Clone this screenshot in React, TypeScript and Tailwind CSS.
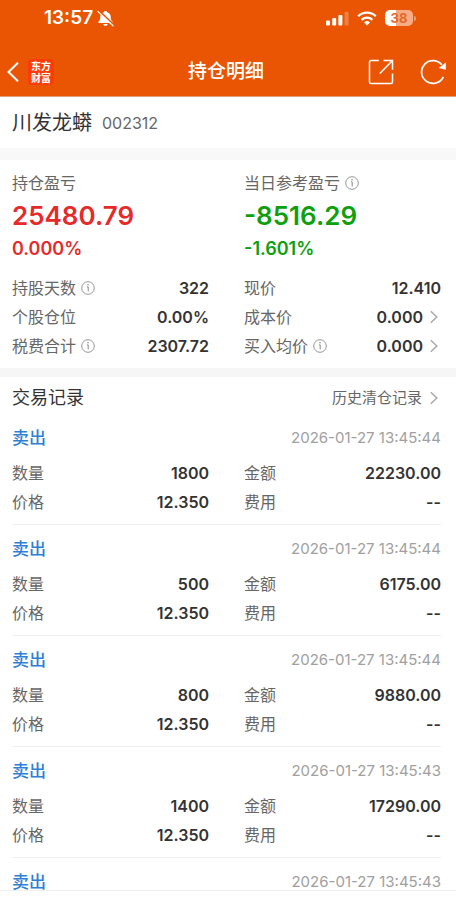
import type { ReactNode } from "react";

interface TradeRecord {
  id: number
  time: string
  detail?: {
    count: string
    price: string
    amount: string
    fee: string
  }
}

const records: TradeRecord[] = [
  { id: 1, time: "2026-01-27 13:45:44", detail: { count: "1800", price: "12.350", amount: "22230.00", fee: "--" } },
  { id: 2, time: "2026-01-27 13:45:44", detail: { count: "500", price: "12.350", amount: "6175.00", fee: "--" } },
  { id: 3, time: "2026-01-27 13:45:44", detail: { count: "800", price: "12.350", amount: "9880.00", fee: "--" } },
  { id: 4, time: "2026-01-27 13:45:43", detail: { count: "1400", price: "12.350", amount: "17290.00", fee: "--" } },
  { id: 5, time: "2026-01-27 13:45:43" },
];

const InfoIcon = () => (
  <svg className="h-[14px] w-[14px] text-[#8a8a8a]" viewBox="0 0 14 14" fill="none" stroke="currentColor">
    <circle cx="7" cy="7" r="6.3" strokeWidth="0.9" />
    <path d="M6 5.900h1.200v4.600" strokeWidth="1" />
    <circle cx="7" cy="3.800" r="0.800" fill="currentColor" stroke="none" />
  </svg>
);

const ArrowIcon = () => (
  <svg className="h-[14px] w-2" viewBox="0 0 8 14" fill="none" stroke="#a9a9a9" strokeWidth="1.5">
    <path d="M0.8 1.3 6.8 7 0.8 12.7" />
  </svg>
);

const StatusBar = () => (
  <div className="flex h-9 items-center justify-between pr-[40px] pl-[44px]">
    <div className="flex items-center gap-1">
      <span className="text-[19px] leading-6 font-semibold">13:57</span>
      <svg className="h-[17px] w-[17px]" viewBox="0 0 17 17">
        <path
          d="M8.500 1c.9 0 1.500.5 1.700 1.200 2.300.6 3.500 2.400 3.500 4.600 0 2.700.7 3.700 1.700 4.600.6.700.2 1.600-.6 1.600H2.200c-.8 0-1.200-.9-.6-1.600 1-.9 1.700-1.900 1.700-4.600 0-2.200 1.200-4 3.500-4.600C7 1.500 7.600 1 8.500 1z"
          fill="#fff"
        />
        <path d="M6.300 14h4.400c-.3 1.300-1.100 2-2.200 2S6.600 15.300 6.300 14z" fill="#fff" />
        <path d="M2 .6 17 14.800" stroke="#ea5504" strokeWidth="1.600" />
        <path d="M.8 1.400 16 15.800" stroke="#fff" strokeWidth="1.300" strokeLinecap="round" />
      </svg>
    </div>
    <div className="flex items-center gap-2">
      <svg className="h-[15px] w-[23px]" viewBox="0 0 23 15" fill="#fff">
        <rect x="0" y="9.500" width="4" height="5" rx="1.100" />
        <rect x="6.200" y="7" width="4" height="7.500" rx="1.100" />
        <rect x="12.400" y="4" width="4" height="10.500" rx="1.100" />
        <rect x="18.600" y="0.800" width="4" height="13.700" rx="1.100" opacity="0.25" />
      </svg>
      <svg className="h-[15px] w-5" viewBox="0 0 20 15" fill="none" stroke="#fff" strokeWidth="2.300">
        <path d="M1.200 5.300a12.600 12.600 0 0 1 17.600 0" />
        <path d="M4.600 8.800a7.800 7.800 0 0 1 10.800 0" />
        <path d="M10 14.600 7 11.400a4.400 4.400 0 0 1 6 0z" fill="#fff" stroke="none" />
      </svg>
      <div className="flex items-center gap-px">
        <span className="flex h-4 w-7 items-center justify-center rounded-[5px] bg-linear-to-r from-white from-40% to-[#f7ac84] to-40% text-[13px] leading-4 font-bold text-[#e4682b]">
          38
        </span>
        <span className="h-[5px] w-[2px] rounded-r-full bg-[#f39a69]" />
      </div>
    </div>
  </div>
);

const NavBar = () => (
  <div className="grid h-[60px] grid-cols-3 items-center pt-3 pr-[10px] pl-[6px]">
    <div className="flex items-center gap-2">
      <button type="button" aria-label="返回">
        <svg className="h-[22px] w-[14px]" viewBox="0 0 14 22" fill="none" stroke="#fff" strokeWidth="2">
          <path d="M12 1.700 2.500 11 12 20.300" />
        </svg>
      </button>
      <span className="flex h-[26px] w-[26px] flex-col items-center justify-center rounded bg-[#fb3c0a] text-[10px] leading-[12px] font-bold">
        <span>东方</span>
        <span>财富</span>
      </span>
    </div>
    <h1 className="text-center text-[19px] leading-7 font-medium">持仓明细</h1>
    <div className="flex items-center justify-end gap-[26px]">
      <button type="button" aria-label="分享">
        <svg className="h-[26px] w-[26px]" viewBox="0 0 26 26" fill="none" stroke="#fff" strokeWidth="1.500">
          <path d="M10.800 1.500H3a1.500 1.500 0 0 0-1.500 1.500v20A1.500 1.500 0 0 0 3 24.500h20a1.500 1.500 0 0 0 1.500-1.500V14.500" />
          <path d="M15.500 1.500h9v9.200M24.300 1.700 11.800 14.500" />
        </svg>
      </button>
      <button type="button" aria-label="刷新">
        <svg className="h-[26px] w-[26px]" viewBox="0 0 26 26" fill="none" stroke="#fff" strokeWidth="1.700">
          <path d="M23.300 17.800A11.400 11.400 0 1 1 21.800 5.800" />
          <path d="M25.800 3.600v7.100l-7-1.600z" fill="#fff" stroke="none" />
        </svg>
      </button>
    </div>
  </div>
);

interface RowProps {
  label: string
  value: string
  info?: boolean
  arrow?: boolean
}

const Row = ({ label, value, info, arrow }: RowProps) => (
  <div className="flex h-[29px] items-center justify-between">
    <dt className="flex items-center gap-[5px] text-[#666]">
      {label}
      {info && <InfoIcon />}
    </dt>
    <dd className="flex items-center gap-[7px] font-semibold text-[#333]">
      {value}
      {arrow && (
        <button type="button" aria-label={label} className="pr-[3px]">
          <ArrowIcon />
        </button>
      )}
    </dd>
  </div>
);

const Columns = ({ children }: { children: ReactNode }) => (
  <dl className="grid grid-cols-2 gap-x-[35px] text-base">{children}</dl>
);

const ProfitSummary = () => (
  <section className="border-b-[9px] border-[#f6f6f6] pt-[11px] pr-[15px] pb-2 pl-3">
    <div className="grid grid-cols-2 gap-x-[35px]">
      <div className="text-[#e62a2a]">
        <p className="text-base leading-6 text-[#666]">持仓盈亏</p>
        <p className="text-[26px] leading-[42px] font-semibold">25480.79</p>
        <p className="text-lg leading-6 font-semibold">0.000%</p>
      </div>
      <div className="text-[#0da00d]">
        <p className="flex items-center gap-[5px] text-base leading-6 text-[#666]">
          当日参考盈亏
          <InfoIcon />
        </p>
        <p className="text-[26px] leading-[42px] font-semibold">-8516.29</p>
        <p className="text-lg leading-6 font-semibold">-1.601%</p>
      </div>
    </div>
    <div className="pt-3">
      <Columns>
        <Row label="持股天数" value="322" info />
        <Row label="现价" value="12.410" />
        <Row label="个股仓位" value="0.00%" />
        <Row label="成本价" value="0.000" arrow />
        <Row label="税费合计" value="2307.72" info />
        <Row label="买入均价" value="0.000" info arrow />
      </Columns>
    </div>
  </section>
);

const RecordItem = ({ time, detail }: TradeRecord) => (
  <li className="border-b border-[#f0f0f0] pt-4 first:pt-[11px] last:border-b-0">
    <div className="flex h-4 items-center justify-between">
      <span className="text-[17px] leading-4 font-medium text-[#2f7fd6]">卖出</span>
      <time className="text-[15px] leading-4 text-[#a0a0a0]">{time}</time>
    </div>
    {detail && (
      <div className="pt-3 pb-2">
        <Columns>
          <Row label="数量" value={detail.count} />
          <Row label="金额" value={detail.amount} />
          <Row label="价格" value={detail.price} />
          <Row label="费用" value={detail.fee} />
        </Columns>
      </div>
    )}
  </li>
);

const App = () => {
  return (
    <div className="flex min-h-screen flex-col bg-white font-['Inter','Noto_Sans_CJK_SC',sans-serif] text-[#333]">
      <header className="border-b border-[#e0a078] bg-[#ea5504] text-white">
        <StatusBar />
        <NavBar />
      </header>

      <main className="flex-1">
        <section className="flex h-[63px] items-center gap-[10px] border-b-[12px] border-[#f8f8f8] pl-3">
          <h2 className="text-xl">川发龙蟒</h2>
          <span className="text-base text-[#666]">002312</span>
        </section>

        <ProfitSummary />

        {/* 交易记录 */}
        <section className="pr-[15px] pl-3">
          <div className="flex h-[42px] items-center justify-between">
            <h2 className="text-lg">交易记录</h2>
            <a href="#history" className="flex items-center gap-2 pr-[3px] text-[15px] text-[#666]">
              历史清仓记录
              <ArrowIcon />
            </a>
          </div>
          <ul>
            {records.map((record) => <RecordItem key={record.id} {...record} />)}
          </ul>
        </section>
      </main>

      <footer className="h-[9px] border-t border-[#f0f0f0]" />
    </div>
  );
};

export default App;
